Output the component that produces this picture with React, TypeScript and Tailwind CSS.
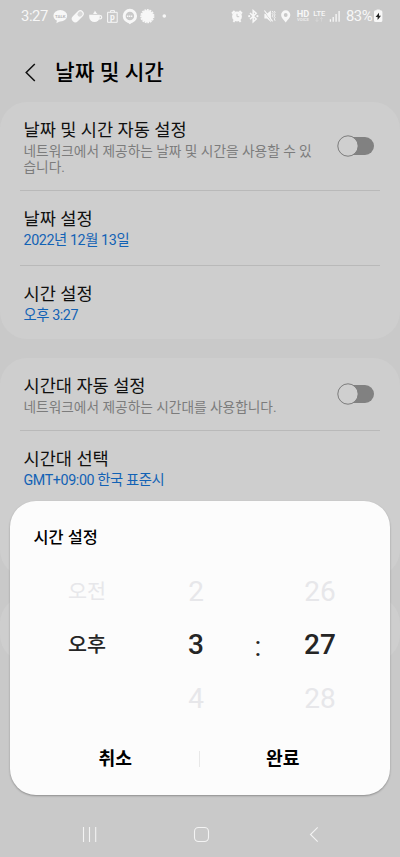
import type { ReactNode } from "react"

interface SettingRow {
  title: string
  summary: string
  toggle?: boolean
  rowClass: string
}

const dateRows: SettingRow[] = [
  {
    title: "날짜 및 시간 자동 설정",
    summary: "네트워크에서 제공하는 날짜 및 시간을 사용할 수 있습니다.",
    toggle: true,
    rowClass: "h-[89px]",
  },
  { title: "날짜 설정", summary: "2022년 12월 13일", rowClass: "h-[75px]" },
  { title: "시간 설정", summary: "오후 3:27", rowClass: "h-[73px]" },
]

const zoneRows: SettingRow[] = [
  {
    title: "시간대 자동 설정",
    summary: "네트워크에서 제공하는 시간대를 사용합니다.",
    toggle: true,
    rowClass: "h-[73px]",
  },
  { title: "시간대 선택", summary: "GMT+09:00 한국 표준시", rowClass: "h-[146px]" },
]

function Toggle() {
  return (
    <svg width="38" height="24" viewBox="0 0 38 24" className="shrink-0">
      <rect x="4" y="3" width="33" height="18" rx="9" fill="#818181" />
      <circle cx="11" cy="12" r="10.2" fill="#cfcfcf" stroke="#7c7c7c" strokeWidth="1" />
    </svg>
  )
}

function Row({ row, last }: { row: SettingRow; last: boolean }) {
  return (
    <div className={`mx-5 flex justify-between border-[#b9b9b9] pl-[3.5px] pr-[5px] ${row.rowClass} ${last ? "" : "border-b"}`}>
      <div className="w-[292px] pt-[15px]">
        <div className="whitespace-nowrap text-[17.6px] leading-[26px] text-[#101010]">{row.title}</div>
        <div
          className={`break-all leading-4 ${
            row.toggle ? "text-[13.7px] text-[#7c7c7c]" : "text-[14.3px] tracking-[-0.4px] text-[#1262b5]"
          }`}
        >
          {row.summary}
        </div>
      </div>
      {row.toggle && (
        <div className="flex items-center">
          <Toggle />
        </div>
      )}
    </div>
  )
}

function Card({ rows }: { rows: SettingRow[] }) {
  return (
    <section className="rounded-[27px] bg-[#cecece]">
      {rows.map((row, i) => (
        <Row key={row.title} row={row} last={i === rows.length - 1} />
      ))}
    </section>
  )
}

function StatusBar() {
  return (
    <header className="flex h-8 items-center pl-[21px] text-[#f7f7f7]">
      <span className="w-[30px] text-[14.8px] tracking-[-0.4px]">3:27</span>
      <svg width="121" height="18" viewBox="51 7 121 18" fill="#f7f7f7">
        {/* chat bubble */}
        <ellipse cx="60.3" cy="15.8" rx="6.9" ry="5.7" />
        <path d="M57 20l-.6 3.2 4-2.2z" />
        <text x="60.3" y="17.5" textAnchor="middle" fontSize="4.4" fontWeight="700" fill="#b9b9b9">TALK</text>
        {/* pill */}
        <g transform="rotate(-45 77.8 16.3)">
          <rect x="70.8" y="12.8" width="14" height="7" rx="3.5" />
          <rect x="78.3" y="14" width="5.4" height="4.6" rx="2.3" fill="#d8d8d8" />
        </g>
        {/* cup */}
        <path d="M89.2 14.8h10.6v2a5.300 5.300 0 0 1-10.600 0z" />
        <path d="M99.500 15.600h.6a1.300 1.300 0 0 1 0 3.200h-1" fill="none" stroke="#f7f7f7" strokeWidth="1.200" />
        <path d="M93.500 14c-.8-1.400 1.800-1.600 1-3.600 2 1.200 1.400 2.600 3 3.600z" />
        {/* shop bag */}
        <path d="M107.600 12.300h9.600v10h-9.600zM110.600 12.200v-1.600h3.800v1.600" fill="none" stroke="#f7f7f7" />
        <text x="112.400" y="19.800" textAnchor="middle" fontSize="8.500" fontWeight="700">p</text>
        {/* ring bubble */}
        <circle cx="129.900" cy="16" r="5.700" fill="none" stroke="#f7f7f7" strokeWidth="2.900" />
        <path d="M126.500 21.500l3.400 2.800 3.400-2.800z" />
        <path d="M126.900 16.200h6" stroke="#f7f7f7" strokeWidth="1.400" strokeDasharray="1.400 .6" />
        {/* badge */}
        <circle cx="147.300" cy="16.200" r="6.100" />
        <circle cx="147.300" cy="16.200" r="6.300" fill="none" stroke="#f7f7f7" strokeWidth="1.600" strokeDasharray="1.800 .8" />
        <circle cx="164.300" cy="16" r="1.800" />
      </svg>
      <svg className="ml-[58px]" width="111" height="18" viewBox="230 7 111 18" fill="#f7f7f7">
        {/* alarm */}
        <circle cx="237" cy="16.500" r="4.900" />
        <path d="M232 13.400l2.600-2.300M242 13.400l-2.600-2.300M233.400 21.800l1.400-1.600M240.600 21.800l-1.400-1.600" stroke="#f7f7f7" strokeWidth="2" />
        <path d="M237 13.800v2.900h2.200" fill="none" stroke="#c9c9c9" />
        {/* bluetooth */}
        <path d="M250 13l6.200 6-3 2.700V10.600l3 2.700-6.200 6" fill="none" stroke="#f7f7f7" strokeWidth="1.500" />
        <circle cx="249.200" cy="16.200" r="1.100" />
        <circle cx="257.400" cy="16.200" r="1.100" />
        {/* muted, vibrate */}
        <path d="M264.400 13.800h2.500l4-3.300v11.400l-4-3.300h-2.500z" />
        <path d="M264.200 11.600l7.600 9.800" stroke="#c9c9c9" strokeWidth="1" />
        <path d="M264.400 10.500l8.200 10.900" stroke="#f7f7f7" strokeWidth="1.200" />
        <path d="M272.200 11l1 1.300-1 1.300 1 1.300-1 1.300 1 1.300M274.300 11l.8 1.300-.8 1.300.8 1.300-.8 1.300.8 1.300-.8 1.300.8 2" fill="none" stroke="#f7f7f7" strokeWidth=".9" />
        {/* location */}
        <path fillRule="evenodd" d="M285.700 10.300a4.600 4.600 0 0 1 4.600 4.600c0 2.800-2.600 4.800-4.600 7.500-2-2.700-4.600-4.700-4.600-7.500a4.600 4.600 0 0 1 4.600-4.600zm0 2.800a1.900 1.900 0 1 0 0 3.800 1.900 1.900 0 0 0 0-3.800z" />
        <text x="296.800" y="16.800" fontSize="8.600" fontWeight="700" textLength="12.600" lengthAdjust="spacingAndGlyphs">HD</text>
        <text x="297" y="21.200" fontSize="4" fontWeight="700" textLength="12" lengthAdjust="spacingAndGlyphs" opacity=".75">VOICE</text>
        <text x="313.300" y="15.800" fontSize="7.400" fontWeight="500" textLength="12" lengthAdjust="spacingAndGlyphs">LTE</text>
        <path d="M317 17.500v4M315.700 20l1.300 1.600 1.300-1.600M321.400 21.600v-4M320.100 19l1.300-1.600 1.300 1.600" fill="none" stroke="#d8d8d8" strokeWidth=".8" />
        <path d="M330.400 21.700v-2.400M333.200 21.700v-4.800M336.100 21.700v-7.700M339.100 21.700v-10.600" stroke="#f7f7f7" strokeWidth="1.300" />
      </svg>
      <span className="ml-[5px] w-[26px] whitespace-nowrap text-[14.8px] tracking-[-0.5px]">83%</span>
      <svg className="ml-[2px]" width="9" height="14" viewBox="0 0 9 14">
        <path d="M2.600 1.300V.5h3.200v.8h.9q1.700 0 1.700 1.700v8.400q0 1.700-1.700 1.700h-5Q0 13.100 0 11.400V3q0-1.700 1.700-1.700z" fill="#f7f7f7" />
        <path d="M5 3.800L1.600 7.900h2v3L7 6.800H5z" fill="#222" />
      </svg>
    </header>
  )
}

function WheelCell({ active, children }: { active?: boolean; children?: ReactNode }) {
  return (
    <div className={`flex h-[53.5px] items-center justify-center ${active ? "font-medium text-[#252525]" : "text-[#e7e7ea]"}`}>
      {children}
    </div>
  )
}

function TimeDialog() {
  return (
    <div className="absolute left-[10px] top-[501px] flex h-[294px] w-[380px] flex-col rounded-[26px] bg-[#fcfcfc] shadow-[0_1px_2px_rgba(0,0,0,0.3)]">
      <h2 className="pl-[23.5px] pt-[25px] text-[16.4px] font-medium leading-6 text-black">시간 설정</h2>
      <div className="mt-[15px] flex text-[28px] leading-8">
        <div className="ml-[37px] w-20 text-[20.7px]">
          <WheelCell>오전</WheelCell>
          <WheelCell active>오후</WheelCell>
        </div>
        <div className="ml-[29px] w-20">
          <WheelCell>2</WheelCell>
          <WheelCell active>3</WheelCell>
          <WheelCell>4</WheelCell>
        </div>
        <div className="flex w-11 flex-col">
          <WheelCell />
          <WheelCell active>
            <span className="pt-[3px] font-normal">:</span>
          </WheelCell>
        </div>
        <div className="w-20">
          <WheelCell>26</WheelCell>
          <WheelCell active>27</WheelCell>
          <WheelCell>28</WheelCell>
        </div>
      </div>
      <div className="mt-3 flex items-center pl-[22px] pr-6 text-[18.2px] font-bold leading-[42px] text-black">
        <button className="flex-1">취소</button>
        <span className="h-4 w-px bg-[#e8e8e8]" />
        <button className="flex-1">완료</button>
      </div>
    </div>
  )
}

function NavBar() {
  return (
    <svg className="absolute left-0 top-[811px]" width="400" height="46" viewBox="0 811 400 46" fill="none" stroke="#f3f3f3" strokeWidth="1.1">
      <path d="M83.500 827v15M89.500 827v15M95.700 827v15" />
      <rect x="194.500" y="827.500" width="14" height="14" rx="4" />
      <path d="M317.700 827.300l-7.200 7.200 7.200 7.200" />
    </svg>
  )
}

export default function App() {
  return (
    <div className="relative h-[857px] w-[400px] overflow-hidden bg-[#c9c9c9] font-[Roboto,'Noto_Sans_CJK_KR',sans-serif]">
      <StatusBar />
      <div className="flex h-[70px] items-center pl-[25px] pt-[10px]">
        <svg width="11" height="19" viewBox="0 0 11 19" fill="none" stroke="#111" strokeWidth="1.5">
          <path d="M9.800 1L1.200 9.500l8.600 8.500" />
        </svg>
        <h1 className="ml-[19px] pt-[2px] text-[21.4px] font-medium text-black">날짜 및 시간</h1>
      </div>
      <main className="flex flex-col gap-[19px]">
        <Card rows={dateRows} />
        <Card rows={zoneRows} />
        <section className="h-[66px] rounded-[27px] bg-[#cecece]" />
      </main>
      <TimeDialog />
      <NavBar />
    </div>
  )
}
